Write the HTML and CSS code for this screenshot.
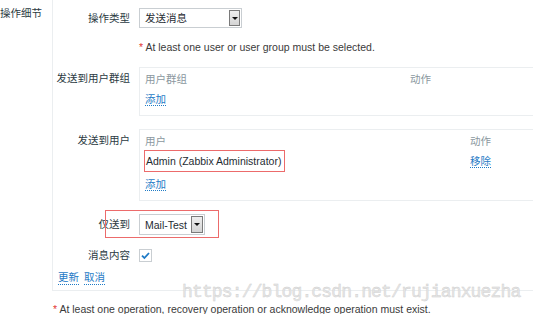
FILE: index.html
```html
<!DOCTYPE html>
<html lang="zh-CN">
<head>
<meta charset="UTF-8">
<title>操作细节</title>
<link rel="stylesheet" href="styles.css">
</head>
<body>
<div class="page">
  <div class="section">
    <div class="section-title">操作细节</div>
    <div class="box">
      <div class="row">
        <div class="label label-select">操作类型</div>
        <div class="field">
          <div class="select select-type"><span class="select-text">发送消息</span><span class="select-btn"><i class="caret"></i></span></div>
        </div>
      </div>

      <div class="row row-error">
        <div class="label"></div>
        <div class="field error"><span class="star">*</span> At least one user or user group must be selected.</div>
      </div>

      <div class="row row-table">
        <div class="label label-table">发送到用户群组</div>
        <div class="field">
          <div class="list list-groups">
            <div class="list-head"><span>用户群组</span><span>动作</span></div>
            <div class="list-foot"><a class="link">添加</a></div>
          </div>
        </div>
      </div>

      <div class="row row-table">
        <div class="label label-table">发送到用户</div>
        <div class="field">
          <div class="list list-users">
            <div class="list-head"><span>用户</span><span>动作</span></div>
            <div class="list-item"><span class="marked">Admin (Zabbix Administrator)</span><span><a class="link">移除</a></span></div>
            <div class="list-foot"><a class="link">添加</a></div>
          </div>
        </div>
      </div>

      <div class="row row-only">
        <div class="label label-select">仅送到</div>
        <div class="field">
          <div class="select select-media"><span class="select-text">Mail-Test</span><span class="select-btn"><i class="caret"></i></span></div>
        </div>
        <div class="mark-box"></div>
      </div>

      <div class="row row-check">
        <div class="label">消息内容</div>
        <div class="field">
          <span class="checkbox">
            <svg width="11" height="11" viewBox="0 0 11 11"><path d="M2 5.6 L4.4 8 L9 3" fill="none" stroke="#1f7bc6" stroke-width="1.8"/></svg>
          </span>
        </div>
      </div>

      <div class="actions">
        <a class="link">更新</a>
        <a class="link">取消</a>
      </div>
    </div>
  </div>

  <div class="error error-bottom"><span class="star">*</span> At least one operation, recovery operation or acknowledge operation must exist.</div>

  <div class="watermark">https://blog.csdn.net/rujianxuezha</div>
</div>
</body>
</html>
```

FILE: styles.css
```css
body {
  margin: 0;
  padding: 0;
  background: #fff;
  font-family: "Liberation Sans", "Noto Sans CJK SC", sans-serif;
  font-size: 10.5px;
  line-height: 14px;
  color: #1f2c33;
  overflow: hidden;
}
.page {
  position: relative;
  width: 533px;
  height: 314px;
  overflow: hidden;
}
.section {
  display: flex;
}
.section-title {
  width: 52px;
  flex: none;
  white-space: nowrap;
  padding-top: 6px;
  color: #2b3a42;
}
.box {
  flex: 1;
  min-width: 0;
  border-left: 1px solid #ebeef0;
  border-bottom: 1px solid #ebeef0;
  padding: 8px 0 5px 0;
}
.row {
  display: flex;
  gap: 9px;
  position: relative;
}
.label {
  width: 77px;
  flex: none;
  text-align: right;
  white-space: nowrap;
  color: #2b3a42;
}
.label-select {
  padding-top: 3px;
}
.label-table {
  padding-top: 4px;
}
.field {
  flex: none;
  white-space: nowrap;
}
.row-error {
  margin-top: 12px;
}
.row-table {
  margin-top: 13px;
}
.row-only {
  margin-top: 13px;
}
.row-check {
  margin-top: 13px;
}
.error {
  color: #3a3a3a;
}
.star {
  color: #e33734;
}

/* select */
.select {
  display: flex;
  align-items: center;
  height: 20px;
  box-sizing: border-box;
  border: 1px solid #c9ced2;
  background: #fff;
  padding: 1px 1px 1px 5px;
}
.select-type {
  width: 103px;
}
.select-media {
  width: 66px;
  height: 21px;
}
.select-text {
  flex: 1;
  color: #1f2c33;
}
.select-btn {
  width: 11px;
  height: 16px;
  box-sizing: border-box;
  border: 1px solid #7a7a7a;
  background: linear-gradient(#eeeeee, #d4d4d4);
  display: flex;
  align-items: center;
  justify-content: center;
}
.select-media .select-btn {
  width: 12px;
  height: 17px;
}
.caret {
  width: 0;
  height: 0;
  border-left: 3px solid transparent;
  border-right: 3px solid transparent;
  border-top: 3px solid #111;
}

/* lists */
.list {
  width: 394px;
  box-sizing: border-box;
  border: 1px solid #ebeef0;
  border-right: none;
  padding: 4px 0 9px 5px;
}
.list-head {
  display: grid;
  color: #8a979e;
}
.list-groups .list-head {
  grid-template-columns: 265px 1fr;
}
.list-users .list-head,
.list-users .list-item {
  display: grid;
  grid-template-columns: 325px 1fr;
}
.list-item {
  margin-top: 2px;
  align-items: center;
}
.list-foot {
  margin-top: 6px;
}
.list-users .list-foot {
  margin-top: 5px;
}
.marked {
  justify-self: start;
  height: 22px;
  line-height: 20px;
  box-sizing: border-box;
  border: 1px solid #ec6b6b;
  margin-left: -1px;
  padding: 0 3px 0 1px;
  white-space: nowrap;
  color: #1f2c33;
}
.link {
  color: #1f7bc6;
  border-bottom: 1px dotted #1f7bc6;
  cursor: pointer;
}

/* annotation box */
.mark-box {
  position: absolute;
  left: 52px;
  top: -4px;
  width: 114px;
  height: 28px;
  box-sizing: border-box;
  border: 1px solid #ec6b6b;
}

/* checkbox */
.checkbox {
  display: flex;
  align-items: center;
  justify-content: center;
  width: 13px;
  height: 13px;
  margin-top: 1px;
  box-sizing: border-box;
  border: 1px solid #c9ced2;
  background: #fff;
}
.actions {
  display: flex;
  gap: 5px;
  margin-top: 8px;
  padding-left: 5px;
}
.error-bottom {
  margin: 11px 0 0 53px;
}
.watermark {
  position: absolute;
  left: 182px;
  top: 282px;
  font-family: "Liberation Mono", monospace;
  font-size: 18px;
  letter-spacing: -0.85px;
  line-height: 20px;
  color: #e8e8e8;
  -webkit-text-stroke: 0.4px #cdcdcd;
  white-space: nowrap;
}
```
